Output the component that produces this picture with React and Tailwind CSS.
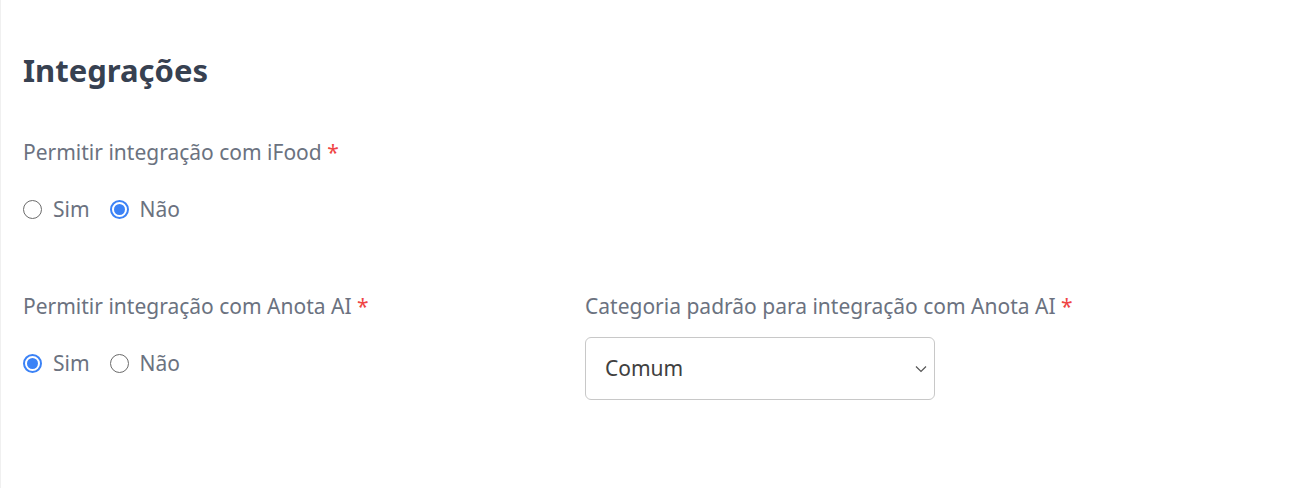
import React, { useState } from 'react';

const Radio = ({ checked, label, onClick }) => (
  <label className="flex items-center gap-[11px] cursor-pointer" onClick={onClick}>
    <span
      className={
        'flex h-[19px] w-[19px] items-center justify-center rounded-full border bg-white ' +
        (checked ? 'border-[#3b82f6] border-2' : 'border-[#6b6b6b]')
      }
    >
      {checked && <span className="h-[11px] w-[11px] rounded-full bg-[#3b82f6]" />}
    </span>
    <span className="text-[21px] leading-[28px] text-[#6b7280]">{label}</span>
  </label>
);

const Label = ({ children }) => (
  <div className="whitespace-nowrap text-[21px] leading-[26px] text-[#6b7280]">
    {children} <span className="text-[#ef4444]">*</span>
  </div>
);

const App = () => {
  const [ifood, setIfood] = useState('nao');
  const [anota, setAnota] = useState('sim');
  const [categoria, setCategoria] = useState('comum');

  return (
    <div
      className="min-h-[488px] w-full bg-white border-l border-[#f0f0f0] px-[22px] pt-[50px]"
      style={{ fontFamily: '"Noto Sans", sans-serif' }}
    >
      <h1 className="text-[31px] font-bold leading-[40px] text-[#374151]">Integrações</h1>

      <div className="mt-[49px]">
        <Label>Permitir integração com iFood</Label>
        <div className="mt-[30px] flex items-center gap-[20px]">
          <Radio checked={ifood === 'sim'} label="Sim" onClick={() => setIfood('sim')} />
          <Radio checked={ifood === 'nao'} label="Não" onClick={() => setIfood('nao')} />
        </div>
      </div>

      <div className="mt-[70px] grid grid-cols-[562px_auto]">
        <div>
          <Label>Permitir integração com Anota AI</Label>
          <div className="mt-[30px] flex items-center gap-[20px]">
            <Radio checked={anota === 'sim'} label="Sim" onClick={() => setAnota('sim')} />
            <Radio checked={anota === 'nao'} label="Não" onClick={() => setAnota('nao')} />
          </div>
        </div>
        <div>
          <Label>Categoria padrão para integração com Anota AI</Label>
          <div className="relative mt-[18px] w-[350px]">
            <select
              value={categoria}
              onChange={(e) => setCategoria(e.target.value)}
              className="h-[63px] w-full appearance-none rounded-[6px] border border-[#c8c8c8] bg-white pl-[19px] pr-10 text-[21px] text-[#404040] outline-none"
            >
              <option value="comum">Comum</option>
              <option value="especial">Especial</option>
            </select>
            <svg
              className="pointer-events-none absolute right-[8px] top-1/2 -translate-y-1/2"
              width="12"
              height="8"
              viewBox="0 0 12 8"
              fill="none"
            >
              <path d="M1 1.5l5 5 5-5" stroke="#555" strokeWidth="1.2" />
            </svg>
          </div>
        </div>
      </div>
    </div>
  );
};

export default App;
